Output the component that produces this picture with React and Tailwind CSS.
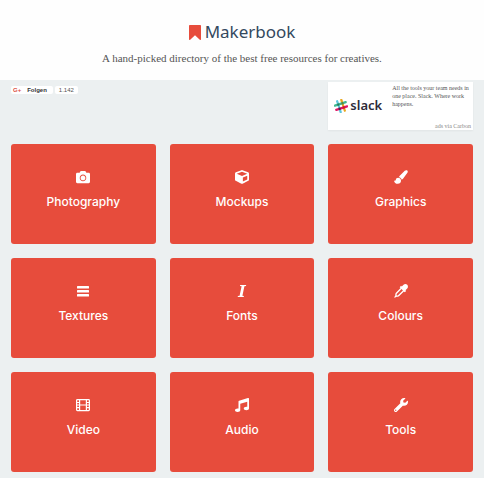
import React from 'react';
import { FaCamera, FaCube, FaMusic, FaWrench } from 'react-icons/fa';

const BookmarkIcon = ({ className }) => (
  <svg viewBox="0 0 12 15" fill="currentColor" className={className} aria-hidden="true">
    <path d="M1 0h10c.6 0 1 .4 1 1v13.300c0 .7-.7.900-1.200.5L6 10.300l-4.800 4.500c-.5.4-1.200.2-1.200-.5V1c0-.6.400-1 1-1z" />
  </svg>
);

const BrushIcon = ({ className }) => (
  <svg viewBox="0 0 16 16" fill="currentColor" className={className} aria-hidden="true">
    <path d="M15.200.7c-.8-.8-2-.7-2.900.2L6.600 6.500c-.6.600-.8 1.100-.7 1.700 1.600.4 2.500 1.400 2.900 2.800.6 0 1.100-.3 1.500-.9l5-6.900c.6-.9.6-1.800-.1-2.500z" />
    <path d="M4.700 8.900C3.200 8.900 2.300 10 2 11.300 1.800 12.200 1.200 12.400 0 11.900c.3 2.500 2 3.900 4.300 3.900 2.200 0 3.700-1.500 3.700-3.500 0-1.900-1.400-3.400-3.300-3.400z" />
  </svg>
);

const BarsIcon = ({ className }) => (
  <svg viewBox="0 0 14 14" fill="currentColor" className={className} aria-hidden="true">
    <rect x="1" y="2" width="12" height="2.400" rx="0.500" />
    <rect x="1" y="6" width="12" height="2.400" rx="0.500" />
    <rect x="1" y="10" width="12" height="2.400" rx="0.500" />
  </svg>
);

const ItalicIcon = ({ className }) => (
  <svg viewBox="0 0 14 14" fill="currentColor" className={className} aria-hidden="true">
    <path d="M5.200 1h6l-.2.900-1.600.4-2 9.400 1.500.4-.2.900h-6l.2-.9 1.700-.4 2-9.400-1.600-.4z" />
  </svg>
);

const DropperIcon = ({ className }) => (
  <svg viewBox="0 0 16 16" fill="currentColor" className={className} aria-hidden="true">
    <path d="M15.100.9c-1.200-1.200-3-1.100-4.200 0L8.900 2.900l-.8-.8-1.600 1.600 1 1-5.300 5.300c-.5.500-.7 1-.7 1.700v1.300L.2 15.100l.7.7L3 14.500h1.300c.7 0 1.200-.2 1.700-.7l5.300-5.300 1 1 1.600-1.600-.8-.8 2-2c1.100-1.200 1.100-3 0-4.200zM4.900 12.700c-.2.200-.4.300-.7.300H3v-1.200c0-.3.100-.5.300-.7l5.300-5.300 1.600 1.600z" />
  </svg>
);

const FilmIcon = ({ className }) => (
  <svg viewBox="0 0 14 14" fill="none" stroke="currentColor" strokeWidth="1.200" className={className} aria-hidden="true">
    <rect x="0.600" y="1.600" width="12.800" height="11" rx="0.800" />
    <path d="M3.600 2v10.500M10.400 2v10.500M3.600 7h6.800M1 4.500h2.500M1 7h2.500M1 9.700h2.500M10.500 4.500H13M10.500 7H13M10.500 9.700H13" />
  </svg>
);

const SlackMark = () => (
  <svg viewBox="0 0 16 16" className="size-3.5 shrink-0" aria-hidden="true">
    <g fill="none" strokeWidth="2.600" strokeLinecap="round" transform="rotate(-18 8 8)">
      <path d="M5.500 1.500v13" stroke="#5cc5dd" />
      <path d="M10.500 1.500v13" stroke="#e9a820" />
      <path d="M1.500 5.500h13" stroke="#3eb991" />
      <path d="M1.500 10.500h13" stroke="#e01765" />
      <path d="M5.500 5.500v.1" stroke="#2c7a62" />
      <path d="M10.500 5.500v.1" stroke="#65863a" />
      <path d="M5.500 10.500v.1" stroke="#472a49" />
      <path d="M10.500 10.500v.1" stroke="#cc2027" />
    </g>
  </svg>
);

const categories = [
  { name: 'Photography', icon: FaCamera },
  { name: 'Mockups', icon: FaCube },
  { name: 'Graphics', icon: BrushIcon },
  { name: 'Textures', icon: BarsIcon },
  { name: 'Fonts', icon: ItalicIcon },
  { name: 'Colours', icon: DropperIcon },
  { name: 'Video', icon: FilmIcon },
  { name: 'Audio', icon: FaMusic },
  { name: 'Tools', icon: FaWrench },
];

const App = () => {
  return (
    <div className="min-h-screen bg-[#ecf0f1] pb-1.5 font-[Inter,sans-serif]">
      <header className="bg-[#fefefe] pt-4 pb-4 text-center">
        <h1 className="flex items-center justify-center gap-1 font-['Noto_Sans',sans-serif] text-[17px] leading-8 text-[#34495e]">
          <BookmarkIcon className="h-[15px] w-3 text-[#e74c3c]" />
          Makerbook
        </h1>
        <p className="pt-1 font-['Liberation_Serif',serif] text-[11px] leading-3 text-[#555555]">
          A hand-picked directory of the best free resources for creatives.
        </p>
      </header>

      <main className="px-[11px]">
        <div className="grid grid-cols-3 gap-x-3.5 pt-0.5 pb-3.5">
          <div className="col-span-2 flex items-start gap-0.5 pt-1 font-['Liberation_Sans',sans-serif] text-[6px] leading-2">
            <button className="flex items-center gap-1.5 rounded-xs bg-white px-0.5 font-bold text-[#333333]">
              <span className="text-[#dc4e41]">G+</span>
              <span className="pr-1">Folgen</span>
            </button>
            <span className="rounded-xs bg-white px-1 text-[#555555]">1.142</span>
          </div>

          <a href="#slack" className="flex h-12 gap-2.5 bg-white pr-0.5 pl-1.5 shadow-xs">
            <span className="flex items-center gap-0.5 font-['Noto_Sans',sans-serif] text-[13px] font-semibold text-[#2d2b3a]">
              <SlackMark />
              slack
            </span>
            <span className="flex flex-1 flex-col justify-between pt-0.5 font-['Liberation_Serif',serif] text-[6px] leading-2 text-[#555555]">
              <span>All the tools your team needs in one place. Slack. Where work happens.</span>
              <span className="text-right text-[#888888]">ads via Carbon</span>
            </span>
          </a>
        </div>

        <nav className="grid grid-cols-3 gap-3.5">
          {categories.map(({ name, icon: Icon }) => (
            <a
              key={name}
              href={`#${name.toLowerCase()}`}
              className="flex h-25 flex-col items-center gap-2.5 rounded-[3px] bg-[#e74c3c] pt-[26px] text-white"
            >
              <Icon className="size-3.5" />
              <span className="text-xs leading-4 font-medium">{name}</span>
            </a>
          ))}
        </nav>
      </main>
    </div>
  );
};

export default App;
